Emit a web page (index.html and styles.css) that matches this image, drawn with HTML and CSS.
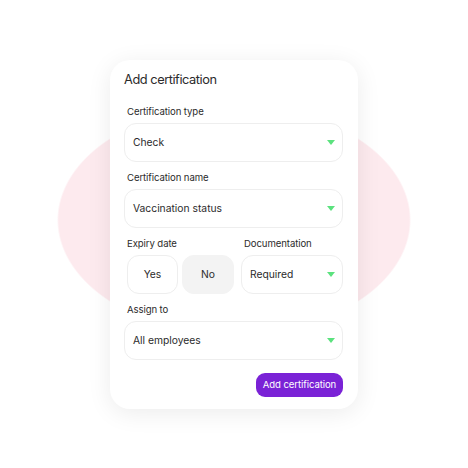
FILE: index.html
```html
<!DOCTYPE html>
<html lang="en">
  <head>
    <meta charset="UTF-8" />
    <meta name="viewport" content="width=device-width, initial-scale=1.0" />
    <title>Add certification</title>
    <link rel="stylesheet" href="styles.css">
  </head>
  <body>
    <div class="card">
      <h2 class="card-title">Add certification</h2>

      <div class="form">
        <div class="field-group">
          <label class="field-label">Certification type</label>
          <div class="select">
            <span>Check</span>
            <span class="caret"></span>
          </div>
        </div>

        <div class="field-group">
          <label class="field-label">Certification name</label>
          <div class="select">
            <span>Vaccination status</span>
            <span class="caret"></span>
          </div>
        </div>

        <div class="field-row">
          <div class="field-group expiry">
            <label class="field-label">Expiry date</label>
            <div class="toggle">
              <button class="toggle-btn">Yes</button>
              <button class="toggle-btn active">No</button>
            </div>
          </div>
          <div class="field-group docs">
            <label class="field-label">Documentation</label>
            <div class="select">
              <span>Required</span>
              <span class="caret"></span>
            </div>
          </div>
        </div>

        <div class="field-group">
          <label class="field-label">Assign to</label>
          <div class="select">
            <span>All employees</span>
            <span class="caret"></span>
          </div>
        </div>
      </div>

      <div class="actions">
        <button class="submit-btn">Add certification</button>
      </div>
    </div>
  </body>
</html>
```

FILE: styles.css
```css
* {
  margin: 0;
  padding: 0;
  box-sizing: border-box;
}

body {
  font-family: Inter, "Noto Sans", sans-serif;
  color: #2b2b2b;
  background: radial-gradient(177px 115px at 234px 220px, #fdeaee 99%, #ffffff 100%);
  min-height: 100vh;
  display: flex;
  align-items: center;
  justify-content: center;
}

.card {
  width: 248px;
  background: #ffffff;
  border-radius: 20px;
  padding: 12px 15px 12px 14px;
  box-shadow: 0 4px 24px rgba(0, 0, 0, 0.08);
}

.card-title {
  font-size: 12.8px;
  font-weight: 400;
  line-height: 16px;
  letter-spacing: -0.45px;
  margin-bottom: 17px;
}

.form {
  display: flex;
  flex-direction: column;
  gap: 9px;
}

.field-group {
  display: flex;
  flex-direction: column;
  gap: 4px;
}

.field-label {
  font-size: 9.6px;
  line-height: 14px;
  letter-spacing: -0.1px;
  padding-left: 3px;
}

.select {
  height: 39px;
  border: 1px solid #eeeeee;
  border-radius: 12px;
  display: flex;
  align-items: center;
  justify-content: space-between;
  padding: 0 7px 0 8px;
  font-size: 10.3px;
}

.caret {
  width: 0;
  height: 0;
  border-left: 4px solid transparent;
  border-right: 4px solid transparent;
  border-top: 5px solid #5be27e;
}

.field-row {
  display: flex;
  gap: 7px;
}

.expiry {
  width: 110px;
}

.docs {
  flex: 1;
}

.toggle {
  display: flex;
  gap: 4px;
  margin-left: 3px;
}

.toggle-btn {
  height: 39px;
  width: 51px;
  border: 1px solid #eeeeee;
  border-radius: 12px;
  background: #ffffff;
  font-family: inherit;
  font-size: 10.3px;
  color: #2b2b2b;
}

.toggle-btn.active {
  width: 52px;
  background: #f3f3f3;
  border-color: #f3f3f3;
}

.actions {
  display: flex;
  justify-content: flex-end;
  margin-top: 13px;
}

.submit-btn {
  height: 24px;
  width: 87px;
  border: none;
  border-radius: 9px;
  background: #7a22d6;
  color: #ffffff;
  font-family: inherit;
  font-size: 9.6px;
  letter-spacing: -0.1px;
}
```
